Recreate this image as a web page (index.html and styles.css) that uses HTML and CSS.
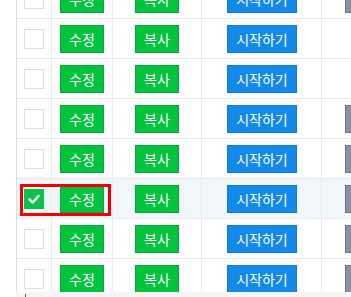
FILE: index.html
```html
<!DOCTYPE html>
<html lang="ko">
<head>
<meta charset="utf-8">
<link rel="stylesheet" href="styles.css">
</head>
<body>
<div class="page">
  <div class="grid-wrap">
    <div class="table">
      <div class="row">
        <div class="cell c-check"><span class="box"></span></div>
        <div class="cell c-edit"><span class="btn green w44">수정</span></div>
        <div class="cell c-copy"><span class="btn green w44">복사</span></div>
        <div class="cell c-start"><span class="btn blue w70">시작하기</span></div>
        <div class="cell c-more"><span class="btn gray"></span></div>
      </div>
      <div class="row">
        <div class="cell c-check"><span class="box"></span></div>
        <div class="cell c-edit"><span class="btn green w44">수정</span></div>
        <div class="cell c-copy"><span class="btn green w44">복사</span></div>
        <div class="cell c-start"><span class="btn blue w70">시작하기</span></div>
        <div class="cell c-more"></div>
      </div>
      <div class="row">
        <div class="cell c-check"><span class="box"></span></div>
        <div class="cell c-edit"><span class="btn green w44">수정</span></div>
        <div class="cell c-copy"><span class="btn green w44">복사</span></div>
        <div class="cell c-start"><span class="btn blue w70">시작하기</span></div>
        <div class="cell c-more"></div>
      </div>
      <div class="row">
        <div class="cell c-check"><span class="box"></span></div>
        <div class="cell c-edit"><span class="btn green w44">수정</span></div>
        <div class="cell c-copy"><span class="btn green w44">복사</span></div>
        <div class="cell c-start"><span class="btn blue w70">시작하기</span></div>
        <div class="cell c-more"><span class="btn gray"></span></div>
      </div>
      <div class="row">
        <div class="cell c-check"><span class="box"></span></div>
        <div class="cell c-edit"><span class="btn green w44">수정</span></div>
        <div class="cell c-copy"><span class="btn green w44">복사</span></div>
        <div class="cell c-start"><span class="btn blue w70">시작하기</span></div>
        <div class="cell c-more"><span class="btn gray"></span></div>
      </div>
      <div class="row selected">
        <div class="cell c-check"><span class="box checked"><svg viewBox="0 0 20 20" width="20" height="20"><polyline points="5.5,10.5 8.8,13.5 14.5,7" fill="none" stroke="#fff" stroke-width="2.4" stroke-linecap="round" stroke-linejoin="round"/></svg></span></div>
        <div class="cell c-edit"><span class="btn green w44">수정</span></div>
        <div class="cell c-copy"><span class="btn green w44">복사</span></div>
        <div class="cell c-start"><span class="btn blue w70">시작하기</span></div>
        <div class="cell c-more"><span class="btn gray"></span></div>
        <div class="highlight"></div>
      </div>
      <div class="row">
        <div class="cell c-check"><span class="box"></span></div>
        <div class="cell c-edit"><span class="btn green w44">수정</span></div>
        <div class="cell c-copy"><span class="btn green w44">복사</span></div>
        <div class="cell c-start"><span class="btn blue w70">시작하기</span></div>
        <div class="cell c-more"><span class="btn gray"></span></div>
      </div>
      <div class="row">
        <div class="cell c-check"><span class="box"></span></div>
        <div class="cell c-edit"><span class="btn green w44">수정</span></div>
        <div class="cell c-copy"><span class="btn green w44">복사</span></div>
        <div class="cell c-start"><span class="btn blue w70">시작하기</span></div>
        <div class="cell c-more"><span class="btn gray"></span></div>
      </div>
    </div>
  </div>
  <div class="hscroll"><span class="mark"></span></div>
</div>
</body>
</html>
```
FILE: styles.css
```css
html, body {
  margin: 0;
  padding: 0;
  background: #ffffff;
}
body {
  font-family: "Noto Sans CJK KR", "Noto Sans", sans-serif;
  width: 351px;
  height: 297px;
  overflow: hidden;
}
.page {
  padding-left: 16px;
  display: flex;
  flex-direction: column;
}
.grid-wrap {
  height: 292px;
  overflow: hidden;
  border-left: 1px solid #d9dce3;
}
.table {
  margin-top: -21px;
  width: 420px;
}
.row {
  position: relative;
  display: flex;
  height: 39px;
  border-bottom: 1px solid #e8e9ee;
}
.row.selected {
  background: #f1f7f8;
}
.cell {
  box-sizing: border-box;
  height: 39px;
  border-right: 1px solid #ebebef;
  display: flex;
  justify-content: center;
  align-items: flex-start;
  padding-top: 6px;
}
.c-check { width: 35px; padding-top: 10px; }
.c-edit { width: 61px; }
.c-copy { width: 89px; }
.c-start { width: 120px; padding-left: 1px; }
.c-more { width: 110px; justify-content: flex-start; padding-left: 23px; border-right: none; }
.box {
  box-sizing: border-box;
  width: 20px;
  height: 20px;
  border: 1px solid #dcdfe6;
  background: #fff;
  display: block;
}
.box.checked {
  border: none;
  background: #0dc24b;
}
.box svg { display: block; }
.btn {
  box-sizing: border-box;
  height: 28px;
  display: flex;
  align-items: center;
  justify-content: center;
  color: #ffffff;
  font-size: 14px;
  line-height: 1;
  border: 1px solid transparent;
}
.w44 { width: 44px; }
.w70 { width: 70px; }
.green {
  background: #02c33d;
  border-color: #0aa83c;
}
.blue {
  background: #1389ea;
  border-color: #1678d3;
}
.gray {
  width: 44px;
  background: #8b90a3;
  border-color: #6f7487;
}
.highlight {
  position: absolute;
  left: 3px;
  top: 5px;
  width: 91px;
  height: 32px;
  box-sizing: border-box;
  border: 3px solid #f20000;
  pointer-events: none;
}
.hscroll {
  height: 5px;
  background: #f5f5f7;
  position: relative;
}
.mark {
  position: absolute;
  left: 9px;
  top: 2px;
  width: 1px;
  height: 3px;
  background: #555;
}
```
